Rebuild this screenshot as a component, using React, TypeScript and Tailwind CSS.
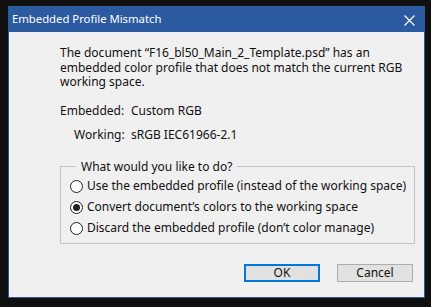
export default function App() {
  const options = [
    { label: "Use the embedded profile (instead of the working space)", checked: false },
    { label: "Convert document\u2019s colors to the working space", checked: true },
    { label: "Discard the embedded profile (don\u2019t color manage)", checked: false },
  ];

  return (
    <div className="w-[431px] h-[307px] bg-[#101010] pl-[8px] pt-[6px] font-['Noto_Sans',sans-serif]">
      <div className="w-[417px] h-[292px] border border-[#2b5aa0] bg-[#f0f0f0] flex flex-col">
        {/* title bar */}
        <div className="h-[25px] bg-[#2b5aa0] flex items-center justify-between pl-[3px] pr-[9px] text-white text-[11.3px]">
          <span>Embedded Profile Mismatch</span>
          <svg width="11" height="11" viewBox="0 0 11 11" className="mt-[1px]">
            <path d="M0.5 0.5 L10.5 10.5 M10.5 0.5 L0.5 10.5" stroke="white" strokeWidth="1.2" />
          </svg>
        </div>

        <div className="pl-[51px] pr-[10px] pt-[14px] text-[12px] text-[#111] leading-[14.5px] whitespace-nowrap">
          <p>
            The document &ldquo;F16_bl50_Main_2_Template.psd&rdquo; has an
            <br />
            embedded color profile that does not match the current RGB
            <br />
            working space.
          </p>

          <div className="mt-[14px] flex">
            <span className="w-[71px]">Embedded:</span>
            <span>Custom RGB</span>
          </div>
          <div className="mt-[10px] flex">
            <span className="w-[71px] pl-[14px]">Working:</span>
            <span>sRGB IEC61966-2.1</span>
          </div>

          <fieldset className="mt-[17px] w-[355px] h-[84px] border border-[#c4c4c4] pl-[9px] pt-[8px]">
            <legend className="ml-[6px] px-[5px] -mb-[2px]">What would you like to do?</legend>
            <div className="flex flex-col gap-[8px]">
              {options.map((o) => (
                <div key={o.label} className="flex items-center gap-[4px] h-[13px]">
                  <span className="w-[13px] h-[13px] shrink-0 rounded-full border border-[#222] bg-white flex items-center justify-center">
                    {o.checked && <span className="w-[7px] h-[7px] rounded-full bg-[#222]" />}
                  </span>
                  <span>{o.label}</span>
                </div>
              ))}
            </div>
          </fieldset>

          <div className="mt-[20px] flex justify-end gap-[17px] pr-[1px]">
            <button className="w-[76px] h-[18px] border-2 border-[#0078d7] bg-[#e1e1e1] text-[12px] leading-[12px]">
              OK
            </button>
            <button className="w-[76px] h-[18px] border border-[#adadad] bg-[#e1e1e1] text-[12px] leading-[12px]">
              Cancel
            </button>
          </div>
        </div>
      </div>
    </div>
  );
}
